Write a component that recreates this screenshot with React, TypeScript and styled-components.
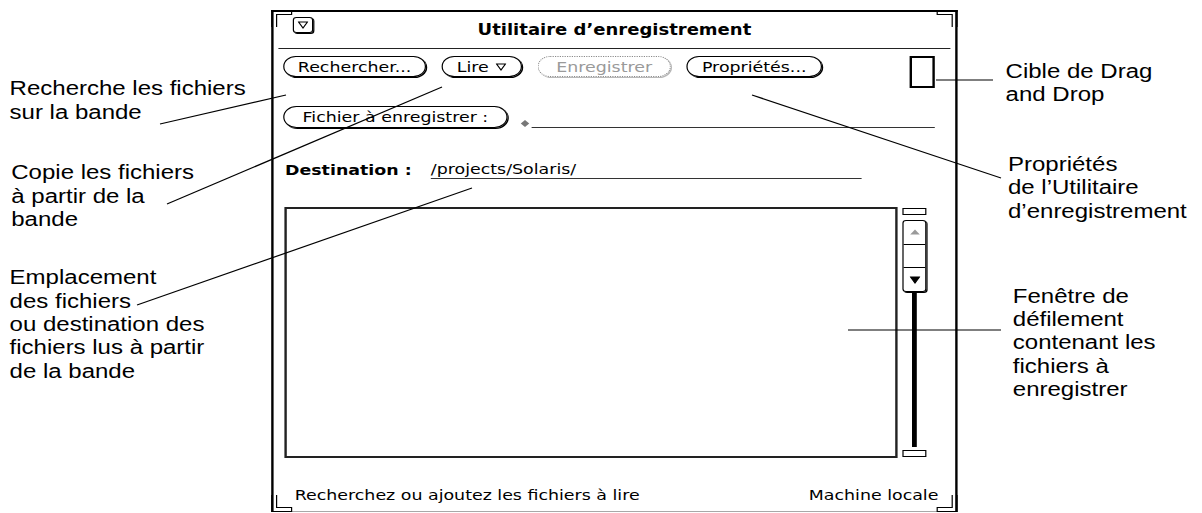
import React from "react";
import styled, { createGlobalStyle } from "styled-components";

// the reference is stretched horizontally, so the stage is laid out narrow and scaled
const STRETCH = 1.2;

const GlobalStyle = createGlobalStyle`
  html, body {
    margin: 0;
    padding: 0;
    background: #fff;
  }
`;

const Page = styled.div`
  position: relative;
  width: 1202px;
  height: 513px;
  overflow: hidden;
  background: #fff;
`;

const Stage = styled.div`
  display: flex;
  width: ${1202 / STRETCH}px;
  height: 513px;
  transform: scaleX(${STRETCH});
  transform-origin: 0 0;
`;

const LeftNotes = styled.div`
  flex: none;
  width: 226px;
  box-sizing: border-box;
  padding-left: 8px;
  display: flex;
  flex-direction: column;
`;

const RightNotes = styled.div`
  flex: 1;
  padding-left: 40px;
  display: flex;
  flex-direction: column;
`;

const Note = styled.div<{ $top: number; $indent?: number }>`
  margin-top: ${p => p.$top}px;
  margin-left: ${p => p.$indent ?? 0}px;
  font-family: "Liberation Sans", Arial, sans-serif;
  font-size: 20px;
  line-height: 23.3px;
  color: #000;
  white-space: nowrap;
`;

const Window = styled.div`
  position: relative;
  flex: none;
  width: 572px;
  height: 502px;
  margin-top: 10px;
  box-sizing: border-box;
  border: 2px solid #000;
  border-bottom: 1px solid #a8a8a8;
  display: flex;
  flex-direction: column;
  font-family: "DejaVu Sans", Verdana, sans-serif;
  color: #000;
`;

const Corner = styled.svg<{ $x: "left" | "right"; $y: "top" | "bottom" }>`
  position: absolute;
  width: 18px;
  height: 18px;
  ${p => (p.$x === "left" ? "left: -2px;" : "right: -2px;")}
  ${p => (p.$y === "top" ? "top: -2px;" : "bottom: -1px;")}
  transform: scale(${p => (p.$x === "left" ? 1 : -1)}, ${p => (p.$y === "top" ? 1 : -1)});
  overflow: visible;
`;

const TitleBar = styled.div`
  display: grid;
  grid-template-columns: 1fr auto 1fr;
  align-items: center;
  height: 36px;
  margin: 0 4px;
  border-bottom: 1px solid #222;
`;

const MenuMark = styled.div`
  justify-self: start;
  align-self: start;
  margin: 5px 0 0 12px;
  width: 17px;
  height: 16px;
  box-sizing: border-box;
  border: 1px solid #000;
  border-radius: 3px;
  box-shadow: 1px 1px 0 #000;
  display: flex;
  align-items: center;
  justify-content: center;
`;

const Title = styled.div`
  font-size: 15px;
  font-weight: bold;
  white-space: nowrap;
`;

const Body = styled.div`
  flex: 1;
  display: flex;
  flex-direction: column;
  padding: 7px 17px 0 8px;
`;

const ButtonRow = styled.div`
  display: flex;
  align-items: flex-start;
  gap: 13px;
`;

const Button = styled.div<{ $w: number; $h?: number; $disabled?: boolean }>`
  flex: none;
  width: ${p => p.$w}px;
  height: ${p => p.$h ?? 21}px;
  box-sizing: border-box;
  border: 1px ${p => (p.$disabled ? "dotted #8a8a8a" : "solid #000")};
  border-radius: 11px;
  box-shadow: 1px 1px 0 ${p => (p.$disabled ? "#b8b8b8" : "#000")};
  display: flex;
  align-items: center;
  justify-content: center;
  gap: 6px;
  font-size: 14.5px;
  color: ${p => (p.$disabled ? "#9a9a9a" : "#000")};
  white-space: nowrap;
`;

const DropTarget = styled.div`
  margin-left: auto;
  width: 21px;
  height: 32px;
  box-sizing: border-box;
  border: 2px solid #000;
`;

const FileRow = styled.div`
  display: flex;
  align-items: flex-end;
  margin-top: 18px;
  height: 22px;
`;

const Diamond = styled.div`
  flex: none;
  width: 5px;
  height: 5px;
  margin: 0 0 2px 12px;
  background: #777;
  transform: rotate(45deg);
`;

const InputLine = styled.div`
  flex: 1;
  margin-left: 3px;
  border-bottom: 1px solid #333;
`;

const DestRow = styled.div`
  display: flex;
  align-items: flex-end;
  margin: 33px 0 0 1.5px;
`;

const FieldLabel = styled.div`
  font-size: 14.5px;
  font-weight: bold;
  line-height: 18px;
  white-space: nowrap;
`;

const FieldValue = styled.div`
  width: 359px;
  margin-left: 16px;
  font-size: 14.5px;
  line-height: 17px;
  border-bottom: 1px solid #333;
  white-space: nowrap;
`;

const Panel = styled.div`
  display: flex;
  gap: 4px;
  margin: 28px 0 0 1px;
`;

const ListBox = styled.div`
  width: 511px;
  height: 251px;
  box-sizing: border-box;
  border: 2px solid #222;
  background: #fff;
`;

const Scrollbar = styled.div`
  width: 20px;
  padding-top: 1px;
  display: flex;
  flex-direction: column;
  align-items: center;
`;

const Anchor = styled.div<{ $gap?: number }>`
  width: 20px;
  height: 7px;
  margin-top: ${p => p.$gap ?? 0}px;
  box-sizing: border-box;
  border: 1px solid #000;
`;

const Elevator = styled.div`
  margin-top: 5px;
  width: 20px;
  height: 72px;
  box-sizing: border-box;
  border: 1px solid #000;
  border-radius: 3px;
  box-shadow: 1px 1px 0 #000;
  display: flex;
  flex-direction: column;
`;

const ElevatorPart = styled.div<{ $line?: boolean }>`
  flex: 1;
  display: flex;
  align-items: center;
  justify-content: center;
  ${p => (p.$line ? "border-bottom: 1px solid #000;" : "")}
`;

const Cable = styled.div`
  width: 4px;
  height: 155px;
  background: #000;
`;

const Footer = styled.div`
  display: flex;
  justify-content: space-between;
  padding: 0 14px 7px 17.6px;
  font-size: 14.5px;
  line-height: 18px;
  white-space: nowrap;
`;

const Leaders = styled.svg`
  position: absolute;
  left: 0;
  top: 0;
  width: 1202px;
  height: 513px;
  pointer-events: none;
`;

const leaderLines = [
  [160, 124, 286, 95],
  [167, 204, 442, 87],
  [137, 305, 472, 188],
  [936, 80, 993, 80],
  [752, 95, 1001, 178],
  [848, 330, 1001, 330],
];

const DownTriangle = ({ filled }: { filled?: boolean }) => (
  <svg width="9" height="8" viewBox="0 0 9 8">
    <path
      d="M0.8 1 H8.2 L4.5 7 Z"
      fill={filled ? "#000" : "none"}
      stroke="#000"
      strokeWidth="1"
    />
  </svg>
);

const UpArrow = () => (
  <svg width="9" height="6" viewBox="0 0 9 6">
    <path d="M4.5 0.5 L8.5 5.5 H0.5 Z" fill="#9a9a9a" />
  </svg>
);

const cornerPath = "M0.5 17 V0.5 H17 V4.5 H4.5 V17";

const App = () => {
  return (
    <Page>
      <GlobalStyle />
      <Stage>
        <LeftNotes>
          <Note $top={77.4}>
            Recherche les fichiers<br />sur la bande
          </Note>
          <Note $top={37.4} $indent={1.4}>
            Copie les fichiers<br />à partir de la<br />bande
          </Note>
          <Note $top={35.1}>
            Emplacement<br />des fichiers<br />ou destination des<br />fichiers lus à partir<br />de la bande
          </Note>
        </LeftNotes>

        <Window>
          {(["left", "right"] as const).map(x =>
            (["top", "bottom"] as const).map(y => (
              <Corner key={x + y} $x={x} $y={y} viewBox="0 0 18 18">
                <path d={cornerPath} fill="none" stroke="#000" strokeWidth="1" />
              </Corner>
            ))
          )}
          <TitleBar>
            <MenuMark>
              <DownTriangle />
            </MenuMark>
            <Title>Utilitaire d’enregistrement</Title>
          </TitleBar>

          <Body>
            <ButtonRow>
              <Button $w={119}>Rechercher...</Button>
              <Button $w={67}>
                Lire <DownTriangle />
              </Button>
              <Button $w={111} $disabled>Enregistrer</Button>
              <Button $w={113}>Propriétés...</Button>
              <DropTarget />
            </ButtonRow>

            <FileRow>
              <Button $w={187} $h={22}>Fichier à enregistrer :</Button>
              <Diamond />
              <InputLine />
            </FileRow>

            <DestRow>
              <FieldLabel>Destination :</FieldLabel>
              <FieldValue>/projects/Solaris/</FieldValue>
            </DestRow>

            <Panel>
              <ListBox />
              <Scrollbar>
                <Anchor />
                <Elevator>
                  <ElevatorPart $line>
                    <UpArrow />
                  </ElevatorPart>
                  <ElevatorPart $line />
                  <ElevatorPart>
                    <DownTriangle filled />
                  </ElevatorPart>
                </Elevator>
                <Cable />
                <Anchor $gap={3} />
              </Scrollbar>
            </Panel>
          </Body>

          <Footer>
            <span>Recherchez ou ajoutez les fichiers à lire</span>
            <span>Machine locale</span>
          </Footer>
        </Window>

        <RightNotes>
          <Note $top={59.7}>
            Cible de Drag<br />and Drop
          </Note>
          <Note $top={46.7} $indent={2}>
            Propriétés<br />de l’Utilitaire<br />d’enregistrement
          </Note>
          <Note $top={61.8} $indent={6}>
            Fenêtre de<br />défilement<br />contenant les<br />fichiers à<br />enregistrer
          </Note>
        </RightNotes>
      </Stage>

      <Leaders viewBox="0 0 1202 513">
        {leaderLines.map(([x1, y1, x2, y2], i) => (
          <line key={i} x1={x1} y1={y1} x2={x2} y2={y2} stroke="#000" strokeWidth="1.2" />
        ))}
      </Leaders>
    </Page>
  );
};

export default App;
